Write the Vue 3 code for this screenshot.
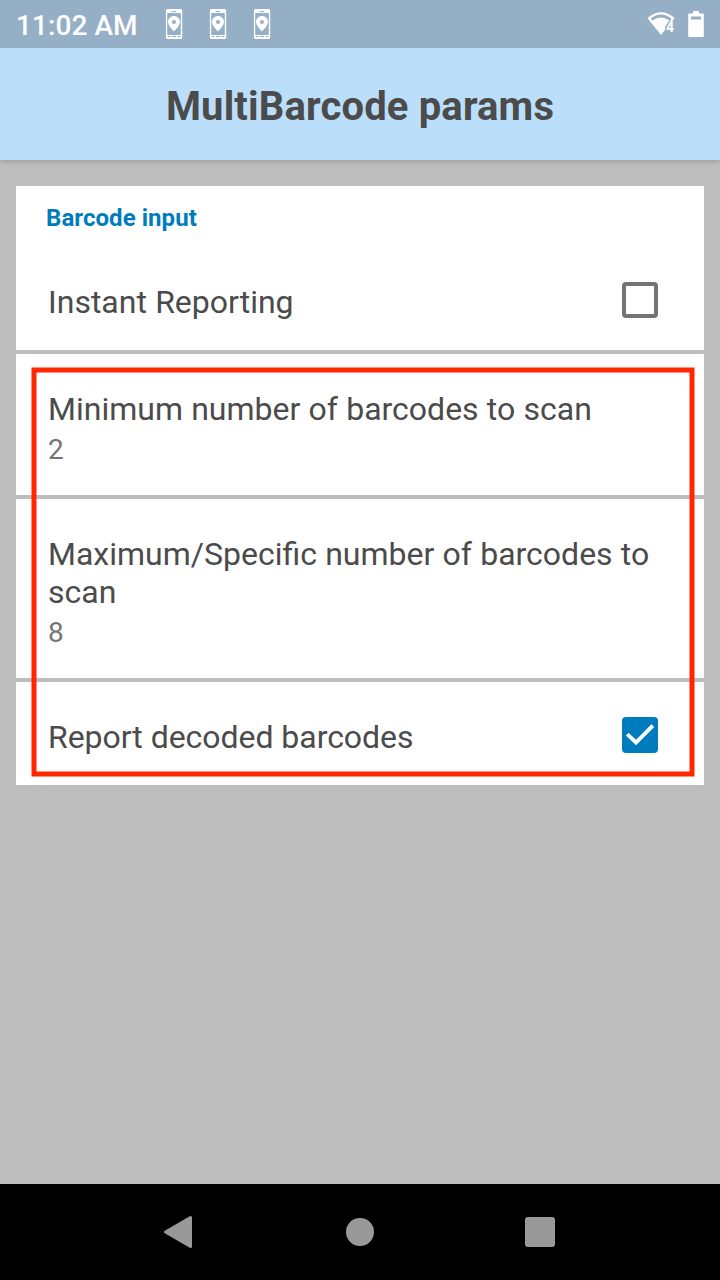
<script setup>
const notifications = [1, 2, 3]
const rows = [
  { title: 'Instant Reporting', checkbox: true, checked: false },
  { title: 'Minimum number of barcodes to scan', value: '2' },
  { title: 'Maximum/Specific number of barcodes to scan', value: '8' },
  { title: 'Report decoded barcodes', checkbox: true, checked: true, tight: true },
]
</script>

<template>
  <div class="screen">
    <div class="status">
      <span class="time">11:02 AM</span>
      <div class="notes">
        <svg v-for="n in notifications" :key="n" width="18" height="32" viewBox="0 0 18 32">
          <path fill="#fff" fill-rule="evenodd" d="M2.500 1H15.500Q17.200 1 17.200 2.700V29.300Q17.200 31 15.500 31H2.500Q.9 31 .9 29.300V2.700Q.9 1 2.500 1ZM2.200 5V27H15.800V5ZM6.500 3V4H11V3ZM2.500 28.100V29.100H5.500V28.100ZM7 28.100V29.100H11V28.100ZM12.500 28.100V29.100H15.500V28.100Z" />
          <path fill="#fff" fill-rule="evenodd" d="M9 8C12.300 8 15 10.500 15 13.700C15 17.500 11 21 9 23.500C7 21 3 17.500 3 13.700C3 10.500 5.700 8 9 8ZM9 12A2 2 0 1 0 9 16A2 2 0 1 0 9 12Z" />
        </svg>
      </div>
      <svg class="wifi" width="30" height="28" viewBox="0 0 30 28">
        <path fill="#fff" fill-rule="evenodd" d="M.4 8.100Q14 -3.600 27.600 8.100L25.600 10.700H23L24.300 8.400Q14 .7 3.700 8.400L5.500 10.500Q14 4.700 22.300 10.500L18 17V20L14 25Z" />
        <text x="19" y="22" class="wifi-num">4</text>
      </svg>
      <svg class="battery" width="16" height="28" viewBox="0 0 16 28">
        <path fill="#fff" fill-rule="evenodd" d="M5 1H11V3.500H14.800Q15.800 3.500 15.800 4.500V26Q15.800 27 14.800 27H1.200Q.2 27 .2 26V4.500Q.2 3.500 1.200 3.500H5ZM3 6.500V9.500H13V6.500Z" />
      </svg>
    </div>

    <header class="appbar"><h1>MultiBarcode params</h1></header>

    <main class="content">
      <section class="card">
        <h2>Barcode input</h2>
        <div v-for="row in rows" :key="row.title" class="row">
          <div class="label">
            <div class="title" :class="{ tight: row.tight }">{{ row.title }}</div>
            <div v-if="row.value" class="value">{{ row.value }}</div>
          </div>
          <span v-if="row.checkbox" class="check" :class="{ on: row.checked }">
            <svg v-if="row.checked" width="36" height="36" viewBox="0 0 36 36">
              <path d="M5.200 17.200L14 25.500L30.800 8.700" fill="none" stroke="#fff" stroke-width="3.800" />
            </svg>
          </span>
        </div>
      </section>
      <svg class="highlight" width="664" height="410" viewBox="0 0 664 410">
        <rect x="3" y="3" width="658" height="404" fill="none" stroke="#ff2600" stroke-width="5" />
      </svg>
    </main>

    <nav class="navbar">
      <svg width="180" height="96" viewBox="0 0 180 96">
        <path fill="#999" stroke="#999" stroke-width="3" stroke-linejoin="round" d="M75.500 48L100.500 33.500V62.500Z" />
      </svg>
      <svg width="180" height="96" viewBox="0 0 180 96"><circle cx="90" cy="48" r="14" fill="#999" /></svg>
      <svg width="180" height="96" viewBox="0 0 180 96"><rect x="75" y="33" width="30" height="30" rx="3" fill="#999" /></svg>
    </nav>
  </div>
</template>

<style>
body { margin: 0; }
</style>

<style scoped>
.screen {
  width: 720px;
  height: 1280px;
  display: flex;
  flex-direction: column;
  overflow: hidden;
  background: #bdbdbd;
  font-family: Roboto, "Liberation Sans", sans-serif;
  color: #4b4b4b;
}
svg { display: block; }
.status {
  position: relative;
  z-index: 1;
  height: 48px;
  flex: none;
  display: flex;
  align-items: center;
  box-sizing: border-box;
  padding: 0 16px;
  background: #95afc6;
}
.time {
  width: 149px;
  font-size: 28px;
  font-weight: 500;
  line-height: 34px;
  letter-spacing: 0.08px;
  color: #fff;
  white-space: nowrap;
  padding-top: 3px;
}
.notes { display: flex; gap: 26px; }
.wifi { margin-left: auto; }
.wifi-num { font-size: 14px; font-weight: 700; fill: #fff; }
.battery { margin-left: 11px; }
.appbar {
  position: relative;
  height: 112px;
  flex: none;
  display: flex;
  justify-content: center;
  align-items: center;
  background: #bbdefb;
  box-shadow: 0 1px 6px rgba(0, 0, 0, 0.2);
}
h1 {
  margin: 0;
  padding-top: 6px;
  font-size: 40px;
  line-height: 48px;
  font-weight: 700;
  letter-spacing: 0.15px;
}
.content {
  position: relative;
  flex: 1;
  padding: 26px 16px 0;
}
.card { background: #fff; }
h2 {
  margin: 0;
  box-sizing: border-box;
  height: 61px;
  padding: 18px 30px 0;
  font-size: 24px;
  line-height: 28px;
  font-weight: 700;
  letter-spacing: 0.06px;
  color: #007cbe;
}
.row {
  display: flex;
  justify-content: space-between;
  align-items: flex-start;
  padding: 36px 46px 29px 32px;
}
.row + .row { border-top: 4px solid #bdbdbd; }
.title {
  font-size: 32px;
  line-height: 38px;
  word-spacing: 0.3px;
}
.title.tight { word-spacing: 0; letter-spacing: -0.04px; }
.value {
  margin-top: 5px;
  font-size: 28px;
  line-height: 33px;
  color: #757575;
}
.check {
  flex: none;
  box-sizing: border-box;
  width: 36px;
  height: 36px;
  margin-top: -1px;
  border: 4px solid #757575;
  border-radius: 4px;
}
.check.on {
  border: 0;
  background: #007cbe;
}
.highlight {
  position: absolute;
  left: 31px;
  top: 207px;
}
.navbar {
  height: 96px;
  flex: none;
  display: flex;
  justify-content: center;
  background: #000;
}
</style>
